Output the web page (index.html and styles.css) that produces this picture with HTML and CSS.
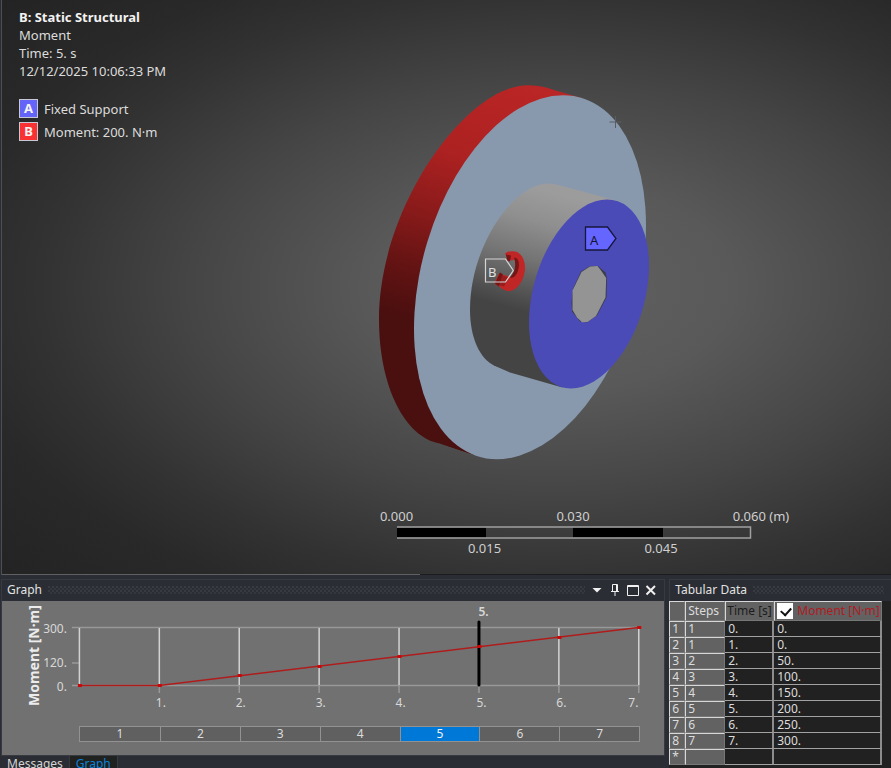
FILE: index.html
```
<!DOCTYPE html>
<html lang="en">
<head>
<meta charset="utf-8">
<title>Static Structural</title>
<link rel="stylesheet" href="styles.css">
</head>
<body>
<main class="workspace">
  <section class="viewport">
    <svg class="scene" viewBox="0 0 889 574" role="img" aria-label="Flanged hub with fixed support and moment">
      <defs>
        <linearGradient id="rim" gradientUnits="userSpaceOnUse" x1="528" y1="88" x2="458" y2="333">
          <stop offset="0" stop-color="#ba2525"/>
          <stop offset=".33" stop-color="#ac2121"/>
          <stop offset=".59" stop-color="#881a1a"/>
          <stop offset=".8" stop-color="#641313"/>
          <stop offset="1" stop-color="#4a0f0f"/>
        </linearGradient>
        <linearGradient id="hub" gradientUnits="userSpaceOnUse" x1="543" y1="190" x2="511" y2="308">
          <stop offset="0" stop-color="#9c9c9c"/>
          <stop offset=".26" stop-color="#8f8f8f"/>
          <stop offset=".57" stop-color="#747474"/>
          <stop offset=".9" stop-color="#4e4e4e"/>
          <stop offset="1" stop-color="#444444"/>
        </linearGradient>
      </defs>
      <g fill="url(#rim)">
        <path d="M543.8 87.2L578.8 97.2L471 454L438 443Z"/>
        <path d="M525.9 84.7C465 84.7 377 206 377 318.5C377 386 403 437 438 443L471 454C521 448.700 609 330 609 215C609 147 582 84.700 525.900 84.700Z"/>
      </g>
      <circle r="1" transform="matrix(111.2 0 -33 182 528 276.7)" fill="#8899ae"/>
      <g fill="url(#hub)">
        <path d="M554.6 184.1L613.6 200.1L560.4 386.9L508 372L492 365L528 277Z"/>
        <path d="M546 183C512 183 468 245 468 309C468 338 478 358 492 365L528 375L588 250L554.600 184.100Z"/>
      </g>
      <circle r="1" transform="matrix(57.2 0 -18 94.5 587 293.5)" fill="#4b4bb8"/>
      <path fill="#3c3c48" d="M588 265.500L596 265.500L603.500 272L605 278L604.500 297L595 315L585 322L578 321L570 311L569.500 302L571 288L579 271Z"/>
      <path fill="#949494" d="M588 266L595.500 265.500L599 270L604.200 277.500L603.500 297L594 315.500L585.500 321.500L580 321.700L575 317L570.500 309.500L570.500 290L579.500 271.500Z"/>
      <g>
        <path fill="#c02626" d="M503 253C506 250.500 511 250 515 251.500C520 254 523 260 523 267C523 277 517 289 508 290.500C503 291 498 287 496 285L493 284L493 281L497 273L507 276C512 278 516 271 516.500 265C516.500 260 514 258 510 260L506 259Z"/>
        <path fill="#751515" d="M504 254L509 255L508 261L505 260ZM512 257C517 257 518 264 516 270C514 276 511 278 508 277C514 271 514 263 512 257ZM493 283L498 272L501 274L497 286Z"/>
        <path fill="#981d1d" d="M500 275L507 277L502 286L498 285Z"/>
      </g>
      <path fill="none" stroke="#d4d4d4" stroke-width="1.200" d="M483.500 258.500H503.500L511.300 270L503.500 281.500H483.500Z"/>
      <text class="tag-text tag-text--light" x="486" y="276">B</text>
      <path fill="#6565ff" stroke="#17173c" stroke-width="1.300" d="M583.500 226.500H605.500L614 238L605.500 249.500H583.500Z"/>
      <text class="tag-text" x="588" y="244">A</text>
      <path stroke="#5a5d60" d="M607.500 121.500H619.500M613.500 115.500V127.500"/>
      <g class="ruler">
        <path fill="#000" d="M395 527H484V537H395ZM571 527H661V537H571Z"/>
        <path fill="none" stroke="#a0a0a0" stroke-width="1.500" d="M395 526.500H748.500V537.500H395"/>
        <text x="394.500" y="520">0.000</text>
        <text x="571" y="520">0.030</text>
        <text x="759" y="520">0.060 (m)</text>
        <text x="482.500" y="552">0.015</text>
        <text x="659" y="552">0.045</text>
      </g>
    </svg>
    <header class="legend">
      <h1 class="legend-title">B: Static Structural</h1>
      <p>Moment</p>
      <p>Time: 5. s</p>
      <p>12/12/2025 10:06:33 PM</p>
      <ul class="loads">
        <li><span class="badge badge--a">A</span>Fixed Support</li>
        <li><span class="badge badge--b">B</span>Moment: 200. N·m</li>
      </ul>
    </header>
  </section>

  <div class="docks">
    <section class="graph-dock">
      <div class="panel">
        <div class="panel-bar">
          <h2>Graph</h2>
          <span class="grip"></span>
          <button class="tool" type="button" aria-label="Menu"><svg viewBox="0 0 12 12"><path fill="#f0f0f0" d="M1.500 4H10.500L6 8.500Z"/></svg></button>
          <button class="tool" type="button" aria-label="Pin"><svg viewBox="0 0 12 12"><path fill="none" stroke="#f0f0f0" d="M3.500 7V.500H8.500V7M7.500 1V7M2 7.500H10M6 8V12"/></svg></button>
          <button class="tool" type="button" aria-label="Maximize"><svg viewBox="0 0 12 12"><path fill="none" stroke="#f0f0f0" d="M.500 1.500H11.500V11.500H.500ZM.500 2.500H11.500"/></svg></button>
          <button class="tool" type="button" aria-label="Close"><svg viewBox="0 0 12 12"><path fill="none" stroke="#f0f0f0" stroke-width="2" d="M1.500 2L10 10.500M10 2L1.500 10.500"/></svg></button>
        </div>
        <div class="graph-body">
          <svg class="chart" viewBox="0 0 663 125" role="img" aria-label="Moment over time">
            <path fill="none" stroke="#989898" stroke-width="1.500" d="M70 26.500H638M70 84.500H638M70 62H77M157.500 84V92M237.500 84V92M317.500 84V92M397.500 84V92M477.500 84V92M557.500 84V92M637.500 84V92"/>
            <path fill="none" stroke="#d2d2d2" stroke-width="1.500" d="M77.500 27V84M157.500 27V84M237.500 27V84M317.500 27V84M397.500 27V84M557.500 27V84M637.500 27V84"/>
            <path stroke="#000" stroke-width="3" stroke-linecap="round" d="M477.500 21V84"/>
            <path fill="none" stroke="#b01c1c" stroke-width="1.500" d="M77.500 84.500H157.500L637.500 26.500"/>
            <path fill="#c80808" d="M76 83h4v3h-4zM156 83h4v3h-4zM236 73h4v3h-4zM316 64h4v3h-4zM396 54h4v3h-4zM476 44h4v3h-4zM556 35h4v3h-4zM636 25h4v3h-4z"/>
            <text class="axis-title" transform="translate(37 105) rotate(-90)">Moment [N·m]</text>
            <g class="ticks ticks--end">
              <text x="65" y="32">300.</text><text x="65" y="66">120.</text><text x="65" y="90">0.</text>
            </g>
            <g class="ticks">
              <text x="154" y="106">1.</text><text x="234" y="106">2.</text><text x="314" y="106">3.</text><text x="394" y="106">4.</text><text x="475" y="106">5.</text><text x="555" y="106">6.</text><text x="627" y="106">7.</text>
              <text class="current" x="482" y="15">5.</text>
            </g>
          </svg>
          <div class="steps">
            <button type="button">1</button><button type="button">2</button><button type="button">3</button><button type="button">4</button><button type="button" class="active">5</button><button type="button">6</button><button type="button">7</button>
          </div>
        </div>
      </div>
      <nav class="tabs">
        <a href="#messages">Messages</a>
        <a href="#graph" class="selected">Graph</a>
      </nav>
    </section>

    <section class="panel table-dock">
      <div class="panel-bar">
        <h2>Tabular Data</h2>
        <span class="grip"></span>
      </div>
      <div class="table-body">
        <table>
          <colgroup><col class="c-row"><col class="c-step"><col class="c-time"><col class="c-moment"></colgroup>
          <thead>
            <tr><th></th><th>Steps</th><th class="time">Time [s]</th><th class="moment"><label><input type="checkbox" checked>Moment [N·m]</label></th></tr>
          </thead>
          <tbody>
            <tr><th>1</th><th>1</th><td>0.</td><td>0.</td></tr>
            <tr><th>2</th><th>1</th><td>1.</td><td>0.</td></tr>
            <tr><th>3</th><th>2</th><td>2.</td><td>50.</td></tr>
            <tr><th>4</th><th>3</th><td>3.</td><td>100.</td></tr>
            <tr><th>5</th><th>4</th><td>4.</td><td>150.</td></tr>
            <tr><th>6</th><th>5</th><td>5.</td><td>200.</td></tr>
            <tr><th>7</th><th>6</th><td>6.</td><td>250.</td></tr>
            <tr><th>8</th><th>7</th><td>7.</td><td>300.</td></tr>
            <tr><th>*</th><th></th><td></td><td></td></tr>
          </tbody>
        </table>
      </div>
    </section>
  </div>
</main>
</body>
</html>
```
FILE: styles.css
```
* {
  box-sizing: border-box;
}

body {
  margin: 0;
  background: #2a2d33;
  color: #dcdcdc;
  font: 12px/16px "Noto Sans", "Open Sans", sans-serif;
  overflow: hidden;
}

h1, h2, p, ul {
  margin: 0;
  padding: 0;
  font-size: inherit;
  font-weight: normal;
}

button {
  padding: 0;
  border: 0;
  background: none;
  color: inherit;
  font: inherit;
}

.workspace {
  display: flex;
  flex-direction: column;
  height: 100vh;
}

/* 3D view */
.viewport {
  position: relative;
  flex: 1;
  min-height: 0;
  margin-left: 1px;
  border-left: 1px solid #4c4e52;
  background:
    linear-gradient(90deg, #5e6062 47%, #1b1c1e 47%) bottom / 100% 1px no-repeat,
    radial-gradient(ellipse 68% 60% at 62% 50%, #616161 0%, #595959 30%, #454545 60%, #323232 85%, #292929 100%, #232323 125%);
}

.scene {
  display: block;
  width: 100%;
  height: 100%;
}

.tag-text {
  font-size: 13px;
  fill: #14142e;
}

.tag-text--light {
  fill: #e0e0e0;
}

.ruler text {
  font-size: 13px;
  fill: #cfcfcf;
  text-anchor: middle;
}

.legend {
  position: absolute;
  top: 8px;
  left: 17px;
  font-size: 13px;
  line-height: 18px;
}

.legend-title {
  font-weight: bold;
  color: #f2f2f2;
}

.loads {
  display: grid;
  gap: 4px;
  margin-top: 19px;
  list-style: none;
}

.loads li {
  display: flex;
  align-items: center;
  gap: 6px;
}

.badge {
  width: 19px;
  height: 19px;
  border: 1px solid #c8c8d4;
  color: #f4f4f4;
  font-weight: bold;
  line-height: 17px;
  text-align: center;
}

.badge--a {
  background: #6464f8;
}

.badge--b {
  background: #f83232;
}

/* Docked panels */
.docks {
  display: grid;
  grid-template-columns: 665fr 222fr;
  gap: 4px;
  padding: 4px 0 0 1px;
  height: 193px;
}

.graph-dock {
  display: flex;
  flex-direction: column;
  min-width: 0;
}

.panel {
  min-width: 0;
  border: 1px solid #373b41;
}

.panel-bar {
  display: flex;
  align-items: center;
  gap: 6px;
  height: 21px;
  padding: 0 7px 2px 5px;
}

.panel-bar h2 {
  color: #e2e2e2;
}

.grip {
  flex: 1;
  height: 8px;
  background:
    radial-gradient(circle at 1px 1px, #383c42 1px, transparent 1px) 0 0 / 4px 4px,
    radial-gradient(circle at 1px 1px, #34383e 1px, transparent 1px) 2px 2px / 4px 4px;
}

.tool {
  width: 12px;
  height: 12px;
}

.tool svg {
  display: block;
}

.graph-body {
  height: 154px;
  background: #717171;
}

.chart {
  display: block;
  width: 100%;
  height: 125px;
}

.axis-title {
  font-size: 14px;
  font-weight: bold;
  fill: #ececec;
}

.ticks text {
  font-size: 12px;
  fill: #d8d8d8;
}

.ticks--end text {
  text-anchor: end;
}

.ticks .current {
  text-anchor: middle;
  font-weight: 600;
}

.steps {
  display: grid;
  grid-template-columns: repeat(7, 1fr);
  height: 16px;
  margin: 0 24px 0 77px;
  border: 1px solid #929292;
  background: #606060;
}

.steps button {
  line-height: 14px;
}

.steps button + button {
  border-left: 1px solid #929292;
}

.steps .active {
  background: #0078d7;
  color: #f4f4f4;
}

.tabs {
  display: flex;
  flex: 1;
  min-height: 0;
  overflow: hidden;
}

.tabs a {
  padding: 0 6px;
  border-right: 1px solid #373b41;
  color: #d4d4d4;
  text-decoration: none;
}

.tabs .selected {
  background: #20221f;
  color: #0a84dc;
}

/* Tabular data */
.table-dock {
  border-right: 0;
  border-bottom: 0;
}

.table-body {
  height: 167px;
  margin-left: -1px;
  background: #212121;
}

table {
  width: 213px;
  table-layout: fixed;
  border-collapse: separate;
  border-spacing: 0;
}

.c-row { width: 16px; }
.c-step { width: 40px; }
.c-time { width: 49px; }

th, td {
  height: 16px;
  padding: 0 0 0 3px;
  border-right: 1px solid #777;
  border-bottom: 1px solid #a2a2a2;
  line-height: 15px;
  font-weight: normal;
  text-align: left;
  white-space: nowrap;
}

th {
  padding-left: 2px;
  border-top: 1px solid #d8d8d8;
  border-left: 1px solid #d8d8d8;
  border-bottom-color: #777;
  background: #626262;
  line-height: 14px;
}

td {
  border-right: 2px solid #8c8c8c;
  background: #212121;
}

thead th {
  height: 20px;
  line-height: 16px;
}

thead .time {
  padding-left: 1px;
  color: #1c1c1c;
}

thead .moment {
  color: #b01c22;
}

thead label {
  display: flex;
  align-items: center;
  gap: 4px;
}

input[type="checkbox"] {
  position: relative;
  appearance: none;
  width: 16px;
  height: 16px;
  margin: 0;
  background: #fff;
}

input[type="checkbox"]:checked::after {
  content: "";
  position: absolute;
  top: 4px;
  left: 4px;
  width: 8px;
  height: 5px;
  border: solid #111;
  border-width: 0 0 2px 2px;
  transform: rotate(-48deg);
}
```
